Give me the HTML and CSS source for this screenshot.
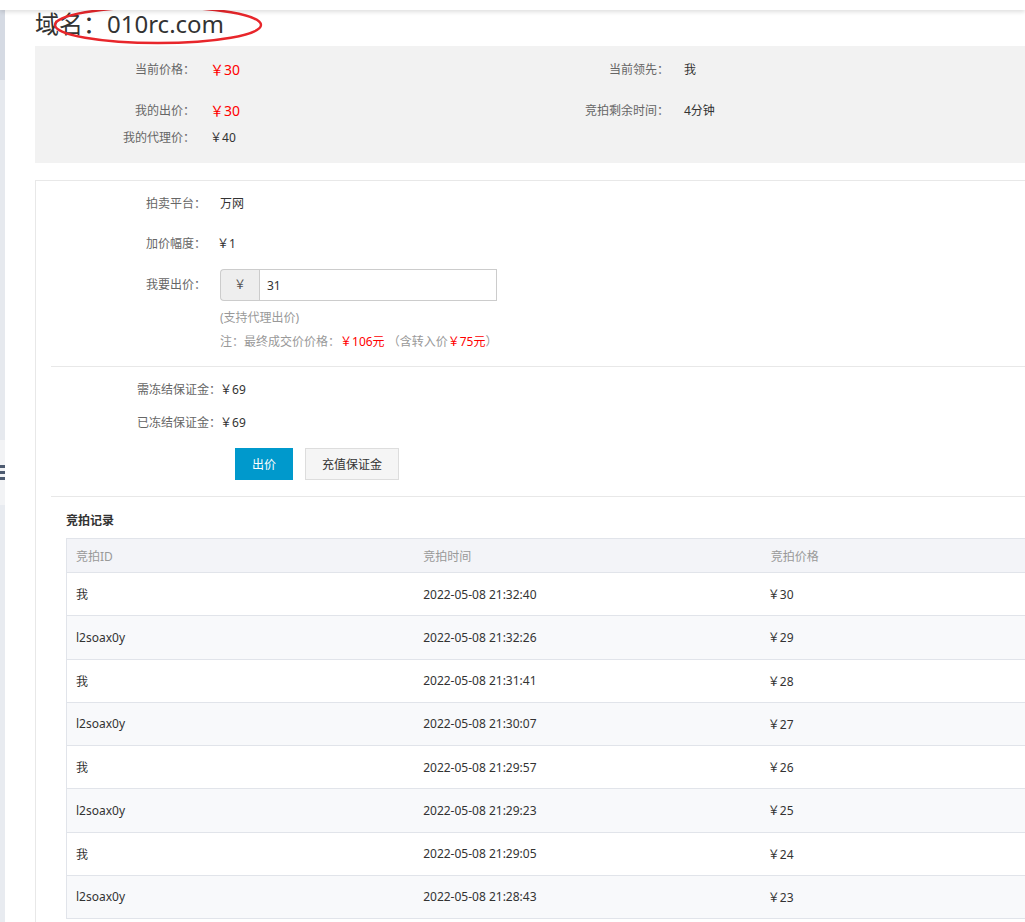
FILE: index.html
```html
<!DOCTYPE html>
<html lang="zh-CN">
<head>
<meta charset="utf-8">
<title>域名竞拍</title>
<link rel="stylesheet" href="styles.css">
</head>
<body>
<div class="topbar"></div>
<div class="layout">
  <aside class="side">
    <div class="side-dark"></div>
    <div class="side-mid"></div>
    <div class="side-btn"><span></span><span></span><span></span></div>
    <div class="side-rest"></div>
  </aside>
  <main class="main">
    <h1 class="title">域名：010rc.com
      <svg class="mark" width="216" height="44" viewBox="0 0 216 44"><ellipse cx="107" cy="21" rx="103" ry="18" fill="none" stroke="#e8262b" stroke-width="2.4"/></svg>
    </h1>

    <section class="panel">
      <div class="pcol pcol-left">
        <div class="prow"><span class="plabel">当前价格：</span><span class="pval red"><span class="yen">￥</span>30</span></div>
        <div class="prow prow-2"><span class="plabel">我的出价：</span><span class="pval red"><span class="yen">￥</span>30</span></div>
        <div class="prow prow-3"><span class="plabel">我的代理价：</span><span class="pval"><span class="yen">￥</span>40</span></div>
      </div>
      <div class="pcol pcol-right">
        <div class="prow"><span class="plabel">当前领先：</span><span class="pval">我</span></div>
        <div class="prow prow-2"><span class="plabel">竞拍剩余时间：</span><span class="pval">4分钟</span></div>
      </div>
    </section>

    <section class="card">
      <div class="frow"><span class="flabel">拍卖平台：</span><span class="fval">万网</span></div>
      <div class="frow frow-2"><span class="flabel">加价幅度：</span><span class="fval"><span class="yen">￥</span>1</span></div>
      <div class="frow frow-input"><span class="flabel">我要出价：</span>
        <div class="igroup"><span class="iaddon">￥</span><input class="iinput" type="text" value="31"></div>
      </div>
      <div class="note note-1">(支持代理出价)</div>
      <div class="note note-2">注：最终成交价价格：<span class="red">￥106元</span> （含转入价<span class="red">￥75元</span>）</div>
      <div class="rule rule-1"></div>
      <div class="drow"><span class="dlabel">需冻结保证金：</span><span class="dval"><span class="yen">￥</span>69</span></div>
      <div class="drow drow-2"><span class="dlabel">已冻结保证金：</span><span class="dval"><span class="yen">￥</span>69</span></div>
      <div class="btns">
        <button class="btn btn-primary" type="button">出价</button>
        <button class="btn btn-default" type="button">充值保证金</button>
      </div>
      <div class="rule rule-2"></div>
      <h2 class="rec-title">竞拍记录</h2>
      <table class="rec">
        <thead>
          <tr><th>竞拍ID</th><th>竞拍时间</th><th>竞拍价格</th></tr>
        </thead>
        <tbody>
          <tr><td>我</td><td>2022-05-08 21:32:40</td><td><span class="yen">￥</span>30</td></tr>
          <tr><td>l2soax0y</td><td>2022-05-08 21:32:26</td><td><span class="yen">￥</span>29</td></tr>
          <tr><td>我</td><td>2022-05-08 21:31:41</td><td><span class="yen">￥</span>28</td></tr>
          <tr><td>l2soax0y</td><td>2022-05-08 21:30:07</td><td><span class="yen">￥</span>27</td></tr>
          <tr><td>我</td><td>2022-05-08 21:29:57</td><td><span class="yen">￥</span>26</td></tr>
          <tr><td>l2soax0y</td><td>2022-05-08 21:29:23</td><td><span class="yen">￥</span>25</td></tr>
          <tr><td>我</td><td>2022-05-08 21:29:05</td><td><span class="yen">￥</span>24</td></tr>
          <tr><td>l2soax0y</td><td>2022-05-08 21:28:43</td><td><span class="yen">￥</span>23</td></tr>
        </tbody>
      </table>
    </section>
  </main>
</div>
</body>
</html>
```

FILE: styles.css
```css
html, body {
  margin: 0;
  padding: 0;
  overflow: hidden;
  background: #fff;
}
body {
  font-family: "Noto Sans", "Noto Sans CJK SC", sans-serif;
  font-size: 12px;
  color: #333;
  height: 922px;
}
.topbar {
  position: relative;
  z-index: 2;
  height: 10px;
  background: #fff;
  box-shadow: 0 2px 4px rgba(0, 0, 0, 0.13);
}
.layout {
  display: flex;
  width: 1200px;
  height: 912px;
}
.side {
  width: 5px;
  flex: none;
  display: flex;
  flex-direction: column;
  background: #e8ebf0;
}
.side-dark { height: 70px; background: #d5dae3; }
.side-mid { height: 360px; background: #e6e9ee; }
.side-btn {
  height: 65px;
  background: #f2f3f5;
  display: flex;
  flex-direction: column;
  justify-content: center;
  gap: 3px;
}
.side-btn span { display: block; height: 3px; background: #4d5b70; }
.side-rest { flex: 1; background: #e8ebf0; }

.main {
  flex: 1;
  padding-left: 30px;
}
.title {
  position: relative;
  margin: 0 0 8px;
  height: 28px;
  line-height: 28px;
  font-size: 24px;
  font-weight: normal;
  color: #333;
}
.mark {
  position: absolute;
  left: 16px;
  top: -6px;
}
.yen { margin-left: -3px; }

.panel {
  display: flex;
  background: #f2f2f2;
  padding: 14px 0 15px;
}
.pcol-left { width: 474px; }
.prow {
  display: flex;
  align-items: center;
  height: 20px;
  line-height: 20px;
}
.prow-2 { margin-top: 21px; }
.prow-3 { margin-top: 7px; }
.plabel {
  width: 160px;
  text-align: right;
  color: #666;
}
.pval { margin-left: 18px; color: #333; }
.pcol-right .pval { margin-left: 15px; }
.pval.red { font-size: 14px; }
.red { color: #f00; }

.card {
  margin-top: 17px;
  border-top: 1px solid #e8e8e8;
  border-left: 1px solid #e8e8e8;
  padding-top: 13px;
  height: 800px;
}
.frow {
  display: flex;
  align-items: center;
  line-height: 20px;
}
.frow-2 { margin-top: 20px; }
.frow-input { margin-top: 15px; }
.flabel {
  width: 170px;
  text-align: right;
  color: #666;
}
.fval { margin-left: 14px; color: #333; }
.igroup {
  display: flex;
  margin-left: 14px;
  height: 32px;
}
.iaddon {
  width: 38px;
  height: 30px;
  line-height: 30px;
  text-align: center;
  background: #eee;
  border: 1px solid #ccc;
  border-right: none;
  border-radius: 4px 0 0 4px;
  color: #555;
}
.iinput {
  box-sizing: border-box;
  width: 238px;
  height: 32px;
  margin: 0;
  padding: 0 7px;
  border: 1px solid #ccc;
  border-radius: 0;
  font-family: inherit;
  font-size: 12px;
  color: #333;
  outline: none;
}
.note {
  margin-left: 184px;
  line-height: 20px;
  color: #999;
}
.note-1 { margin-top: 7px; }
.note-2 { margin-top: 4px; }
.rule {
  height: 1px;
  background: #e8e8e8;
  margin-left: 15px;
}
.rule-1 { margin-top: 14px; }
.rule-2 { margin-top: 16px; }
.drow {
  display: flex;
  line-height: 20px;
  margin-top: 13px;
}
.dlabel {
  width: 185px;
  text-align: right;
  color: #666;
}
.dval { margin-left: 2px; color: #333; }
.btns {
  display: flex;
  gap: 12px;
  margin-top: 15px;
  margin-left: 199px;
}
.btn {
  box-sizing: border-box;
  height: 32px;
  margin: 0;
  padding: 0;
  font-family: inherit;
  font-size: 12px;
  border-radius: 0;
  cursor: pointer;
}
.btn-primary {
  width: 58px;
  background: #0099cc;
  border: 1px solid #0099cc;
  color: #fff;
}
.btn-default {
  width: 94px;
  background: #f5f5f5;
  border: 1px solid #ddd;
  color: #333;
}
.rec-title {
  margin: 14px 0 7px 30px;
  font-size: 12px;
  line-height: 20px;
  font-weight: bold;
  color: #333;
}
.rec {
  margin-left: 30px;
  width: 1044px;
  table-layout: fixed;
  border-collapse: collapse;
  border: 1px solid #e1e4ea;
}
.rec th, .rec td {
  text-align: left;
  padding: 0 0 0 9px;
  font-weight: normal;
  border-bottom: 1px solid #e1e4ea;
}
.rec th {
  height: 33px;
  background: #f3f4f8;
  color: #999;
}
.rec td {
  height: 42.25px;
  color: #333;
}
.rec tbody tr:nth-child(even) td { background: #f8f9fb; }
```
